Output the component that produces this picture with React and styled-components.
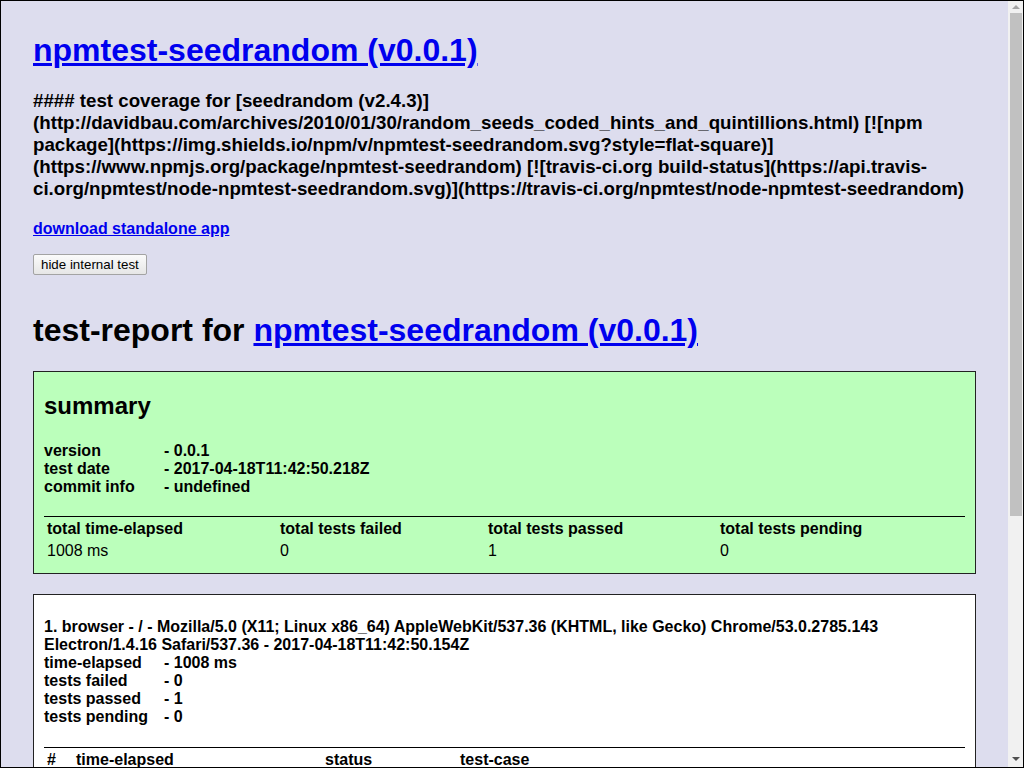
import React from 'react'
import styled, { createGlobalStyle } from 'styled-components'

const GlobalStyle = createGlobalStyle`
  html, body {
    margin: 0;
    padding: 0;
  }
`

const Window = styled.div`
  box-sizing: border-box;
  height: 100vh;
  display: flex;
  border: 1px solid #000;
  background: #dde;
  overflow: hidden;
`

const Content = styled.div`
  flex: 1;
  min-width: 0;
  overflow: hidden;
  color: #000;
  font-family: "Liberation Sans", Arial, Helvetica, sans-serif;
  padding: 0 32px 32px 32px;
`

/* classic scrollbar, drawn by hand */
const Scrollbar = styled.div`
  width: 15px;
  flex-shrink: 0;
  display: flex;
  flex-direction: column;
  background: #f1f1f1;
`

const ArrowBox = styled.div`
  height: ${(p) => p.$h}px;
  margin-bottom: ${(p) => p.$mb || 0}px;
  display: flex;
  align-items: center;
  justify-content: center;
`

const Arrow = styled.div`
  width: 0;
  height: 0;
  border-left: 4px solid transparent;
  border-right: 4px solid transparent;
  ${(p) =>
    p.$up
      ? 'border-bottom: 4px solid #a3a3a3;'
      : 'border-top: 4px solid #505050;'}
`

const Thumb = styled.div`
  height: 503px;
  margin: 0 1px 0 2px;
  background: #c1c1c1;
`

const Spacer = styled.div`
  flex: 1;
`

const Link = styled.a`
  color: #00e;
  text-decoration: underline;
`

const Title = styled.h1`
  font-size: 32px;
  font-weight: bold;
  margin: ${(p) => p.$top || 31}px 0 0 0;
`

const Coverage = styled.h3`
  font-size: 18.72px;
  font-weight: bold;
  margin: 21px 0 0 0;
`

const Download = styled.h4`
  font-size: 16px;
  font-weight: bold;
  margin: 20px 0 0 0;
`

const ToggleButton = styled.button`
  display: block;
  box-sizing: border-box;
  height: 21px;
  margin-top: 16px;
  font-family: "Liberation Sans", Arial, sans-serif;
  font-size: 13.33px;
  color: #000;
  padding: 0 7px;
  background: linear-gradient(#fbfbfb, #e6e6e6);
  border: 1px solid #a3a3a3;
  border-radius: 2px;
`

const ReportBox = styled.div`
  background: ${(p) => (p.$summary ? '#bfb' : '#fff')};
  border: 1px solid #222;
  margin-top: ${(p) => p.$top}px;
  padding: 0 10px 10px 10px;
  font-weight: bold;
`

const BoxTitle = styled.h2`
  font-size: 24px;
  margin: 20px 0 0 0;
`

const BoxHeading = styled.h4`
  font-size: 16px;
  line-height: 18px;
  margin: 23px 0 0 0;
`

const InfoList = styled.div`
  margin-top: ${(p) => p.$top || 0}px;
  font-size: 16px;
  line-height: 18px;
`

const InfoRow = styled.div`
  display: flex;
`

const InfoLabel = styled.span`
  display: inline-block;
  width: 120px;
  flex-shrink: 0;
`

const Table = styled.table`
  width: 100%;
  margin-top: ${(p) => p.$top}px;
  border-top: 1px solid #000;
  border-spacing: 2px;
  font-size: 16px;
  line-height: 18px;
  text-align: left;
`

const Th = styled.th`
  box-sizing: border-box;
  width: ${(p) => (p.$w ? `${p.$w}px` : 'auto')};
  padding: 1px;
  font-weight: bold;
`

const Td = styled.td`
  padding: 1px;
  font-weight: normal;
`

const summaryInfo = [
  ['version', '- 0.0.1'],
  ['test date', '- 2017-04-18T11:42:50.218Z'],
  ['commit info', '- undefined'],
]

const browserInfo = [
  ['time-elapsed', '- 1008 ms'],
  ['tests failed', '- 0'],
  ['tests passed', '- 1'],
  ['tests pending', '- 0'],
]

const App = () => {
  return (
    <Window>
      <GlobalStyle />
      <Content>
        <Title>
          <Link href="#">npmtest-seedrandom (v0.0.1)</Link>
        </Title>
        <Coverage>
          #### test coverage for [seedrandom (v2.4.3)]
          (http://davidbau.com/archives/2010/01/30/random_seeds_coded_hints_and_quintillions.html)
          [![npm package](https://img.shields.io/npm/v/npmtest-seedrandom.svg?style=flat-square)]
          (https://www.npmjs.org/package/npmtest-seedrandom) [![travis-ci.org
          build-status](https://api.travis-ci.org/npmtest/node-npmtest-seedrandom.svg)](https://travis-ci.org/npmtest/node-npmtest-seedrandom)
        </Coverage>
        <Download>
          <Link href="#">download standalone app</Link>
        </Download>
        <ToggleButton>hide internal test</ToggleButton>

        <Title $top={37}>
          test-report for <Link href="#">npmtest-seedrandom (v0.0.1)</Link>
        </Title>

        <ReportBox $summary $top={22}>
          <BoxTitle>summary</BoxTitle>
          <InfoList $top={22}>
            {summaryInfo.map(([label, value]) => (
              <InfoRow key={label}>
                <InfoLabel>{label}</InfoLabel>
                {value}
              </InfoRow>
            ))}
          </InfoList>
          <Table $top={20}>
            <thead>
              <tr>
                <Th $w={231}>total time-elapsed</Th>
                <Th $w={206}>total tests failed</Th>
                <Th $w={230}>total tests passed</Th>
                <Th>total tests pending</Th>
              </tr>
            </thead>
            <tbody>
              <tr>
                <Td>1008 ms</Td>
                <Td>0</Td>
                <Td>1</Td>
                <Td>0</Td>
              </tr>
            </tbody>
          </Table>
        </ReportBox>

        <ReportBox $top={20}>
          <BoxHeading>
            1. browser - / - Mozilla/5.0 (X11; Linux x86_64) AppleWebKit/537.36 (KHTML, like Gecko)
            Chrome/53.0.2785.143 Electron/1.4.16 Safari/537.36 - 2017-04-18T11:42:50.154Z
          </BoxHeading>
          <InfoList>
            {browserInfo.map(([label, value]) => (
              <InfoRow key={label}>
                <InfoLabel>{label}</InfoLabel>
                {value}
              </InfoRow>
            ))}
          </InfoList>
          <Table $top={21}>
            <thead>
              <tr>
                <Th $w={27}>#</Th>
                <Th $w={247}>time-elapsed</Th>
                <Th $w={133}>status</Th>
                <Th>test-case</Th>
              </tr>
            </thead>
            <tbody>
              <tr>
                <Td>1</Td>
                <Td>1008 ms</Td>
                <Td>passed</Td>
                <Td>testCase_buildApp_default</Td>
              </tr>
            </tbody>
          </Table>
        </ReportBox>
      </Content>
      <Scrollbar>
        <ArrowBox $h={12}>
          <Arrow $up />
        </ArrowBox>
        <Thumb />
        <Spacer />
        <ArrowBox $h={14} $mb={1}>
          <Arrow />
        </ArrowBox>
      </Scrollbar>
    </Window>
  )
}

export default App
